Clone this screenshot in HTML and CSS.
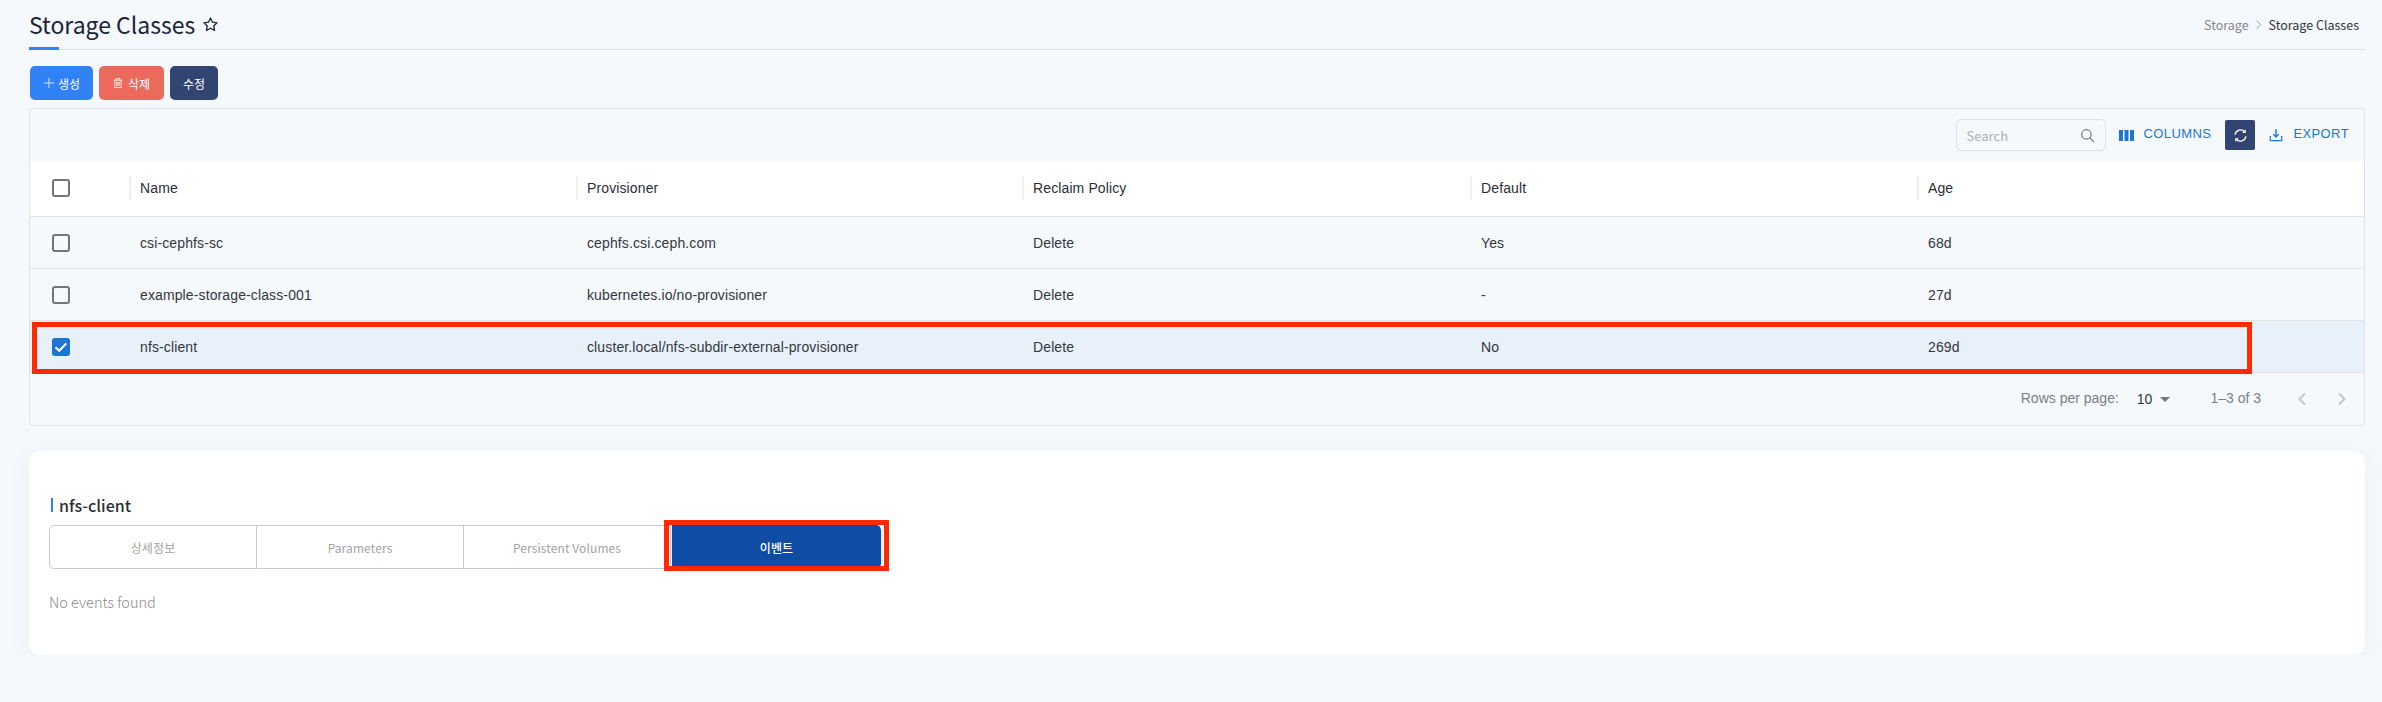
FILE: index.html
```html
<!DOCTYPE html>
<html lang="en">
<head>
    <meta charset="UTF-8">
    <title>Storage Classes</title>
    <link rel="stylesheet" href="styles.css">
</head>
<body>
    <div class="page">
        <div class="page-head">
            <h1 class="page-title">Storage Classes
                <svg class="star" viewBox="0 0 24 24" width="17" height="17"><path d="M12 2.8l2.8 6 6.5.8-4.8 4.4 1.3 6.5-5.8-3.3-5.8 3.3 1.3-6.5L2.7 9.6l6.5-.8z" fill="none" stroke="#1a2438" stroke-width="1.8" stroke-linejoin="round"/></svg>
            </h1>
            <div class="crumbs">
                <span>Storage</span>
                <svg viewBox="0 0 10 12" width="8" height="11"><path d="M2 1l5 5-5 5" fill="none" stroke="#85898f" stroke-width="1"/></svg>
                <span class="crumb-current">Storage Classes</span>
            </div>
        </div>

        <div class="actions">
            <button class="btn btn-blue">
                <svg viewBox="0 0 14 14" width="12" height="12"><path d="M7 1v12M1 7h12" stroke="#cfe0fb" stroke-width="1.2" fill="none"/></svg>
                생성
            </button>
            <button class="btn btn-red">
                <svg viewBox="0 0 12 14" width="12" height="14"><path d="M1 3.5h10M4 3.5V1.5h4v2M2.2 3.5v9h7.6v-9M4.5 5.5v5M6 5.5v5M7.5 5.5v5" stroke="#fff" stroke-width="1" fill="none"/></svg>
                삭제
            </button>
            <button class="btn btn-navy">수정</button>
        </div>

        <div class="table-panel">
            <div class="toolbar">
                <div class="search">
                    <span>Search</span>
                    <svg viewBox="0 0 16 16" width="15" height="15"><circle cx="6.8" cy="6.8" r="5" fill="none" stroke="#6f757d" stroke-width="1.3"/><path d="M10.5 10.5l4.3 4.3" stroke="#6f757d" stroke-width="1.4"/></svg>
                </div>
                <a class="tool-link tool-columns">
                    <svg viewBox="0 0 15 11" width="15" height="11"><path d="M0 0h4v11H0zM5.5 0h4v11h-4zM11 0h4v11h-4z" fill="#1976d2"/></svg>
                    <span>COLUMNS</span>
                </a>
                <button class="refresh">
                    <svg viewBox="0 0 16 16" width="15" height="15"><path d="M2.2 7A6 6 0 0 1 12.6 4M13.8 9A6 6 0 0 1 3.4 12" fill="none" stroke="#fff" stroke-width="1.4"/><path d="M13.6 1.4v3.8H9.8zM2.4 14.6v-3.8h3.8z" fill="#fff"/></svg>
                </button>
                <a class="tool-link tool-export">
                    <svg viewBox="0 0 16 16" width="14" height="14"><path d="M1.5 9v5.5h13V9" fill="none" stroke="#1976d2" stroke-width="1.4"/><path d="M8 1.5v8.5M4.8 7L8 10.2 11.2 7" fill="none" stroke="#1976d2" stroke-width="1.6"/></svg>
                    <span>EXPORT</span>
                </a>
            </div>

            <div class="row row-head">
                <div class="cell-check"><span class="check"></span></div>
                <div class="cell">Name</div>
                <div class="cell">Provisioner</div>
                <div class="cell">Reclaim Policy</div>
                <div class="cell">Default</div>
                <div class="cell">Age</div>
            </div>
            <div class="row">
                <div class="cell-check"><span class="check"></span></div>
                <div class="cell">csi-cephfs-sc</div>
                <div class="cell">cephfs.csi.ceph.com</div>
                <div class="cell">Delete</div>
                <div class="cell">Yes</div>
                <div class="cell">68d</div>
            </div>
            <div class="row">
                <div class="cell-check"><span class="check"></span></div>
                <div class="cell">example-storage-class-001</div>
                <div class="cell">kubernetes.io/no-provisioner</div>
                <div class="cell">Delete</div>
                <div class="cell">-</div>
                <div class="cell">27d</div>
            </div>
            <div class="row row-selected">
                <div class="cell-check">
                    <span class="check check-on">
                        <svg viewBox="0 0 18 18" width="18" height="18"><path d="M3.5 9.2l3.8 3.6 7-7.4" fill="none" stroke="#fff" stroke-width="2"/></svg>
                    </span>
                </div>
                <div class="cell">nfs-client</div>
                <div class="cell">cluster.local/nfs-subdir-external-provisioner</div>
                <div class="cell">Delete</div>
                <div class="cell">No</div>
                <div class="cell">269d</div>
                <div class="mark mark-row"></div>
            </div>

            <div class="pager">
                <span class="pager-label">Rows per page:</span>
                <span class="pager-size">10<i class="caret"></i></span>
                <span class="pager-label pager-range">1–3 of 3</span>
                <svg class="pager-prev" viewBox="0 0 10 14" width="10" height="14"><path d="M8 1.5L2.5 7 8 12.5" fill="none" stroke="#c3c6cb" stroke-width="2"/></svg>
                <svg class="pager-next" viewBox="0 0 10 14" width="10" height="14"><path d="M2 1.5L7.5 7 2 12.5" fill="none" stroke="#c3c6cb" stroke-width="2"/></svg>
            </div>
        </div>

        <div class="detail-card">
            <h2 class="detail-title">nfs-client</h2>
            <div class="tabs">
                <div class="tab">상세정보</div>
                <div class="tab">Parameters</div>
                <div class="tab">Persistent Volumes</div>
                <div class="tab tab-active">이벤트<div class="mark mark-tab"></div></div>
            </div>
            <p class="empty">No events found</p>
        </div>
    </div>
</body>
</html>
```

FILE: styles.css
```css
* {
    box-sizing: border-box;
}
body {
    margin: 0;
    background: #f5f8fc;
    font-family: "Noto Sans CJK KR", "Noto Sans", sans-serif;
    color: #2b2f36;
}
.page {
    padding: 0 17px 0 29px;
}
.page-head {
    height: 50px;
    display: flex;
    justify-content: space-between;
    align-items: center;
    border-bottom: 1px solid #dde1e6;
    position: relative;
    padding-bottom: 1px;
}
.page-head::after {
    content: "";
    position: absolute;
    left: 0;
    bottom: -1px;
    width: 30px;
    height: 3px;
    background: #3182f6;
}
.page-title {
    margin: 0;
    font-size: 23px;
    font-weight: 400;
    color: #1a2438;
    display: flex;
    align-items: center;
    gap: 7px;
}
.crumbs {
    display: flex;
    align-items: center;
    gap: 6px;
    font-size: 12.5px;
    color: #85898f;
    padding-right: 6px;
}
.crumb-current {
    color: #33373d;
}
.actions {
    display: flex;
    gap: 6px;
    margin-top: 16px;
    padding-left: 1px;
}
.btn {
    height: 34px;
    border: none;
    border-radius: 5px;
    color: #fff;
    font-family: "Noto Sans CJK KR", sans-serif;
    font-size: 12px;
    display: flex;
    align-items: center;
    gap: 3px;
    padding: 0 13px;
    white-space: nowrap;
}
.btn-blue {
    background: #3182f6;
    width: 63px;
}
.btn-red {
    background: #eb6a5b;
    width: 65px;
    gap: 5px;
    padding: 0 14px;
}
.btn-navy {
    background: #324572;
    width: 48px;
}
.table-panel {
    margin-top: 8px;
    border: 1px solid #e0e3e7;
    border-radius: 4px;
    background: #f6f9fc;
    font-family: "Liberation Sans", Arial, sans-serif;
    font-size: 14px;
}
.toolbar {
    height: 52px;
    display: flex;
    align-items: center;
    justify-content: flex-end;
    padding-right: 15px;
}
.search {
    width: 150px;
    height: 32px;
    border: 1px solid #dcdfe3;
    border-radius: 5px;
    display: flex;
    justify-content: space-between;
    align-items: center;
    padding: 0 10px;
    font-family: "Noto Sans CJK KR", sans-serif;
    font-size: 13px;
    color: #a9adb3;
}
.tool-link {
    display: flex;
    align-items: center;
    color: #1976d2;
    font-size: 13px;
    letter-spacing: 0.4px;
}
.tool-link span {
    padding-bottom: 4px;
}
.tool-columns {
    margin-left: 13px;
    gap: 10px;
}
.tool-export {
    gap: 10px;
}
.refresh {
    width: 30px;
    height: 30px;
    margin: 0 14px;
    background: #324572;
    border: none;
    border-radius: 2px;
    padding: 0;
    display: flex;
    align-items: center;
    justify-content: center;
}
.row {
    height: 52px;
    display: grid;
    grid-template-columns: 99px 447px 446px 448px 447px 1fr;
    align-items: center;
    border-bottom: 1px solid #e0e3e7;
    position: relative;
    color: #33373d;
    letter-spacing: 0.12px;
}
.row-head {
    height: 56px;
    padding-bottom: 1px;
    background: #fff;
    color: #2b2f36;
}
.row-selected {
    background: #e8f0fa;
}
.cell-check {
    padding-left: 22px;
    display: flex;
}
.cell {
    padding-left: 11px;
}
.row-head .cell {
    border-left: 2px solid #eef0f2;
    padding-left: 9px;
    height: 24px;
    line-height: 24px;
}
.check {
    width: 18px;
    height: 18px;
    border: 2px solid #757575;
    border-radius: 3px;
    display: block;
}
.check-on {
    background: #1976d2;
    border: none;
}
.pager {
    height: 52px;
    display: flex;
    align-items: center;
    justify-content: flex-end;
    padding-right: 17px;
    color: #33373d;
}
.pager-label {
    color: #7b7f85;
    padding-bottom: 3px;
}
.pager-size {
    margin-left: 18px;
    display: flex;
    align-items: center;
    gap: 8px;
}
.caret {
    display: block;
    border: 5px solid transparent;
    border-top-color: #757575;
    border-bottom: none;
}
.pager-range {
    margin-left: 40px;
}
.pager-prev {
    margin-left: 36px;
}
.pager-next {
    margin-left: 30px;
}
.detail-card {
    margin-top: 25px;
    height: 204px;
    background: #fff;
    border-radius: 12px;
    box-shadow: 0 4px 24px rgba(60, 80, 110, 0.05);
    padding: 47px 20px 0;
}
.detail-title {
    margin: 0 0 0 2px;
    padding-left: 6px;
    border-left: 2px solid #3182f6;
    font-size: 16px;
    font-weight: 500;
    line-height: 14px;
    color: #2b2f36;
}
.tabs {
    margin-top: 13px;
    display: flex;
    height: 44px;
    font-size: 12px;
    letter-spacing: 0.1px;
}
.tab {
    width: 207px;
    border: 1px solid #c9c9c9;
    border-left: none;
    color: #a3a3a3;
    display: flex;
    align-items: center;
    justify-content: center;
}
.tab:first-child {
    width: 208px;
    border-left: 1px solid #c9c9c9;
    border-radius: 5px 0 0 5px;
}
.tab-active {
    width: 212px;
    background: #0f4ca5;
    border: none;
    border-left: 1px solid #e6ebf4;
    border-right: 2px solid #e6ebf4;
    border-radius: 0 6px 6px 0;
    color: #fff;
    font-weight: 500;
    position: relative;
}
.empty {
    margin: 22px 0 0;
    font-size: 14.5px;
    font-weight: 300;
    color: #8c8c8c;
}
.mark {
    position: absolute;
    border: 5px solid #ff2a00;
    pointer-events: none;
}
.mark-row {
    left: 2px;
    top: 1px;
    width: 2220px;
    height: 52px;
}
.mark-tab {
    left: -8px;
    top: -5px;
    width: 225px;
    height: 51px;
}
```
